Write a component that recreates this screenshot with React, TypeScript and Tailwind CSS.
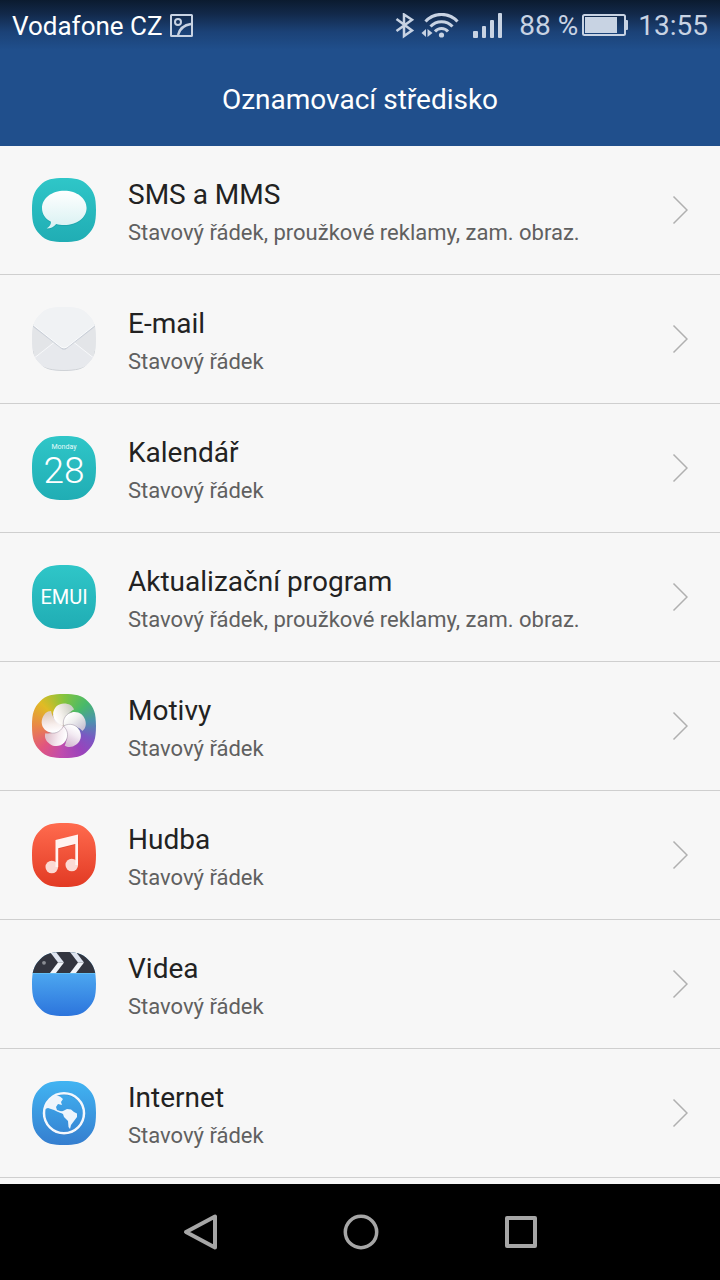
import type { ReactNode } from 'react';

const SHAPE = 'M32 0C43 0 50 1 56 7.500C62 13.500 64 19 64 32C64 45 62 50.500 56 56.500C50 63 43 64 32 64C21 64 14 63 8 56.500C2 50.500 0 45 0 32C0 19 2 13.500 8 7.500C14 1 21 0 32 0Z';

function AppIcon({ id, from, to, children }: { id: string; from: string; to: string; children: ReactNode }) {
  return (
    <svg viewBox="0 0 64 64" className="h-16 w-16 shrink-0" aria-hidden="true">
      <defs>
        <linearGradient id={`${id}-bg`} x1="0" y1="0" x2="0" y2="1">
          <stop offset="0" stopColor={from} />
          <stop offset="1" stopColor={to} />
        </linearGradient>
        <linearGradient id={`${id}-fg`} x1="0" y1="0" x2="0" y2="1">
          <stop offset="0" stopColor="#ffffff" />
          <stop offset="1" stopColor="#d8f1f2" />
        </linearGradient>
        <clipPath id={`${id}-clip`}>
          <path d={SHAPE} />
        </clipPath>
      </defs>
      <g clipPath={`url(#${id}-clip)`}>
        <rect width="64" height="64" fill={`url(#${id}-bg)`} />
        {children}
      </g>
    </svg>
  );
}

function MessagesIcon() {
  const bubble = 'M32.300 12.700C44.800 12.700 54.600 20.200 54.600 30C54.600 39.800 44.800 47 32.300 47C29 47 26.600 46.700 24.200 46C21.600 49.200 18.600 50.600 14.700 50.600C17.600 48.800 19 46.600 19 43.800C13.200 40.800 10 36 10 30C10 20.200 19.800 12.700 32.300 12.700Z';
  return (
    <AppIcon id="sms" from="#2fc6c8" to="#20adb4">
      <path d={bubble} fill="#128f98" opacity="0.35" transform="translate(0 1)" />
      <path d={bubble} fill="url(#sms-fg)" />
    </AppIcon>
  );
}

function MailIcon() {
  return (
    <AppIcon id="mail" from="#f0f2f5" to="#e4e6ea">
      <path d="M0 17L24 38L0 58Z" fill="#e3e5e8" />
      <path d="M64 17L40 38L64 58Z" fill="#e3e5e8" />
      <path d="M0 53L22 36H42L64 53V64H0Z" fill="#e7e9ed" />
      <path d="M1 52L22 35.500M63 52L42 35.500" stroke="#f8f9fb" strokeWidth="1" fill="none" />
      <path d="M0 19L29 41.500Q32 44 35 41.500L64 19V17H0Z" fill="#c4cad3" opacity="0.8" />
      <path d="M0 0H64V17L35 40Q32 42 29 40L0 17Z" fill="#f0f2f4" />
      <path d="M0 17L29 40Q32 42 35 40L64 17" fill="none" stroke="#fbfcfd" strokeWidth="1" />
      <path d="M1 44C2 56 9 63.500 32 63.500C55 63.500 62 56 63 44" fill="none" stroke="#cfd2d6" strokeWidth="1" />
    </AppIcon>
  );
}

function CalendarIcon() {
  return (
    <AppIcon id="cal" from="#2fc6c8" to="#20adb4">
      <text x="32" y="13" textAnchor="middle" fill="#e6fafa" className="font-['Roboto',sans-serif] text-[7px]">Monday</text>
      <text x="32" y="47" textAnchor="middle" fill="#ffffff" className="font-['Roboto',sans-serif] text-[37px] font-light">28</text>
    </AppIcon>
  );
}

function EmuiIcon() {
  return (
    <AppIcon id="emui" from="#2fc6c8" to="#20adb4">
      <text x="32" y="39" textAnchor="middle" fill="#ffffff" className="font-['Roboto',sans-serif] text-[20px]">EMUI</text>
    </AppIcon>
  );
}

function ThemesIcon() {
  return (
    <svg viewBox="0 0 64 64" className="h-16 w-16 shrink-0" aria-hidden="true">
      <defs>
        <linearGradient id="themes-petal" x1="0.900" y1="0.300" x2="0.100" y2="0.700">
          <stop offset="0" stopColor="#e0d3dc" stopOpacity="0.850" />
          <stop offset="0.600" stopColor="#f8f3f5" stopOpacity="0.950" />
          <stop offset="1" stopColor="#ffffff" />
        </linearGradient>
        <clipPath id="themes-clip">
          <path d={SHAPE} />
        </clipPath>
      </defs>
      <foreignObject width="64" height="64" clipPath="url(#themes-clip)">
        <div className="h-16 w-16 bg-[conic-gradient(from_0deg,#83c43e,#47b96b_45deg,#4c92ae_80deg,#7b57c3_115deg,#9a43bb_145deg,#bf4bae_185deg,#e1557f_225deg,#e98748_270deg,#e0bb25_315deg,#83c43e)]" />
      </foreignObject>
      {[0, 72, 144, 216, 288].map((angle) => (
        <g key={angle} transform={`rotate(${angle} 31.500 32)`}>
          <path d="M31.500 32C24 31 20.300 25 21 19.500C22 13 26.500 9.500 32 9.500C37 9.500 40.500 11.500 42 15.500C37 18 32 24 31.500 32Z" fill="url(#themes-petal)" />
          <path d="M31.500 32C24 31 20.300 25 21 19.500" fill="none" stroke="#7d6f86" strokeWidth="0.900" opacity="0.400" />
        </g>
      ))}
    </svg>
  );
}

function MusicIcon() {
  return (
    <AppIcon id="music" from="#ff6b4e" to="#e23a24">
      <g fill="#b52a18" opacity="0.350" transform="translate(0.500 1)">
        <path d="M23.500 17L46 11.500V20L26 25Z" />
      </g>
      <circle cx="19.800" cy="44" r="6.300" fill="#fbd9d3" />
      <circle cx="39.800" cy="42" r="6.300" fill="#fbd9d3" />
      <path d="M23.500 17L46 11.500V42H43.300V21L26.200 25.300V44H23.500Z" fill="#fff3f0" />
    </AppIcon>
  );
}

function VideoIcon() {
  return (
    <AppIcon id="video" from="#5cc0fa" to="#2c74dc">
      <rect width="64" height="21" fill="#33353f" />
      <rect y="21" width="64" height="1" fill="#60bdf4" />
      <path d="M18 0H24L32 10.500H26Z" fill="#dfe5f0" />
      <path d="M26 10.500H32L24 21H18Z" fill="#f2f5fa" />
      <path d="M38 0H44L52 10.500H46Z" fill="#dfe5f0" />
      <path d="M46 10.500H52L44 21H38Z" fill="#f2f5fa" />
      <circle cx="12" cy="10.800" r="1.900" fill="#8b8d94" />
    </AppIcon>
  );
}

function BrowserIcon() {
  return (
    <AppIcon id="web" from="#41b4f2" to="#357ecf">
      <circle cx="32" cy="33" r="20" fill="none" stroke="#1d5aa5" strokeWidth="2" opacity="0.350" />
      <circle cx="32" cy="32.300" r="20" fill="none" stroke="#f4f8fd" strokeWidth="2.500" />
      <path d="M14 24L18 18L23 14L28 15.500L31 18L29 21L30 24L26 23L24 26L25 29L28 30L31 31L30 32L26 31L22 29L16 27L13 28Z" fill="#eef5fc" />
      <path d="M31 30L35 28L39 28.500L42 31L45 32.500L45 36L42 40L39 44L38 48L36.500 46L36 40L32 36L31 33L27 31Z" fill="#eef5fc" />
    </AppIcon>
  );
}

const FULL = 'Stavový řádek, proužkové reklamy, zam. obraz.';
const BAR = 'Stavový řádek';

const apps: { name: string; detail: string; icon: ReactNode }[] = [
  { name: 'SMS a MMS', detail: FULL, icon: <MessagesIcon /> },
  { name: 'E-mail', detail: BAR, icon: <MailIcon /> },
  { name: 'Kalendář', detail: BAR, icon: <CalendarIcon /> },
  { name: 'Aktualizační program', detail: FULL, icon: <EmuiIcon /> },
  { name: 'Motivy', detail: BAR, icon: <ThemesIcon /> },
  { name: 'Hudba', detail: BAR, icon: <MusicIcon /> },
  { name: 'Videa', detail: BAR, icon: <VideoIcon /> },
  { name: 'Internet', detail: BAR, icon: <BrowserIcon /> },
];

function StatusBar() {
  return (
    <div className="flex h-[52px] items-center justify-between px-3 text-[#c8d3e3]">
      <div className="flex items-center gap-[6px]">
        <span className="text-[26px] leading-8 text-white">Vodafone CZ</span>
        <svg viewBox="0 1 24 24" className="h-6 w-6" fill="none" stroke="currentColor" strokeWidth="2" aria-hidden="true">
          <rect x="2" y="2" width="21" height="21" rx="0.500" />
          <circle cx="9" cy="9" r="3" />
          <path d="M9 22C10.500 16 15 12 22 11" strokeWidth="2.400" />
        </svg>
      </div>
      <div className="flex items-center">
        <svg viewBox="0 1 20 26" className="h-[26px] w-5" fill="none" stroke="currentColor" strokeWidth="2.500" aria-hidden="true">
          <path d="M1.500 7L17 18.500L9 24V2.500L17 7.700L1.500 19" />
        </svg>
        <svg viewBox="0 1 40 26" className="ml-[6px] h-[26px] w-10" fill="none" stroke="currentColor" strokeWidth="3" aria-hidden="true">
          <path d="M4.500 9.500C13 0 28 0 36.500 9.500" />
          <path d="M9.500 14.500C15.500 8 25.500 8 31.500 14.500" />
          <path d="M14 19.500C17.500 15.500 23.500 15.500 27 19.500" />
          <circle cx="20.500" cy="23" r="2.600" fill="currentColor" stroke="none" />
          <path d="M0.500 21L5 17V25ZM6.500 17L11.500 21L6.500 25Z" fill="currentColor" stroke="none" />
        </svg>
        <svg viewBox="0 0 30 26" className="ml-3 h-[26px] w-[30px]" fill="currentColor" aria-hidden="true">
          <rect x="0" y="18" width="5" height="7" rx="1" />
          <rect x="9" y="13" width="4" height="12" rx="1" />
          <rect x="17" y="7" width="4" height="18" rx="1" />
          <rect x="25" y="0" width="4" height="25" rx="1" />
        </svg>
        <span className="ml-4 text-[28px] leading-[34px]">88 %</span>
        <svg viewBox="0 1 46 24" className="ml-1 h-6 w-[46px]" fill="currentColor" aria-hidden="true">
          <rect x="1" y="2" width="42" height="20" rx="1.500" fill="none" stroke="currentColor" strokeWidth="2" />
          <rect x="3" y="4" width="32" height="16" />
          <rect x="43" y="7" width="3" height="10" rx="1" />
        </svg>
        <time className="ml-[10px] text-[28px] leading-[34px]">13:55</time>
      </div>
    </div>
  );
}

export default function App() {
  return (
    <div className="flex min-h-screen flex-col bg-[#f7f7f7] font-['Roboto',sans-serif]">
      <header className="bg-[#204f8c] bg-[linear-gradient(to_bottom,#0b1b2f_0px,#12294a_14px,#1b4277_32px,#204f8c_50px)]">
        <StatusBar />
        <h1 className="pt-[30px] pb-7 text-center text-[28px] leading-9 font-normal text-white">Oznamovací středisko</h1>
      </header>
      <main className="flex-1">
        <ul>
          {apps.map((app) => (
            <li key={app.name} className="border-b border-[#cfcfcf]">
              <button type="button" className="flex h-32 w-full items-center px-8 text-left">
                {app.icon}
                <span className="ml-8 flex min-w-0 flex-1 flex-col pt-2">
                  <span className="text-[28px] leading-[38px] text-[#222222]">{app.name}</span>
                  <span className="text-[22px] leading-[38px] text-[#606060]">{app.detail}</span>
                </span>
                <svg viewBox="0 0 16 30" className="h-[30px] w-4 shrink-0" fill="none" stroke="#b0b0b0" strokeWidth="1.500" aria-hidden="true">
                  <path d="M1.500 1.500L15 15L1.500 28.500" />
                </svg>
              </button>
            </li>
          ))}
        </ul>
      </main>
      <nav aria-label="Navigace" className="flex h-24 items-center justify-center gap-[120px] bg-black text-[#a6a6a6]">
        <button type="button" aria-label="Zpět">
          <svg viewBox="0 0 40 40" className="h-10 w-10" fill="none" stroke="currentColor" strokeWidth="4" strokeLinejoin="round">
            <path d="M35 4.500V35.500L6 20Z" />
          </svg>
        </button>
        <button type="button" aria-label="Domů">
          <svg viewBox="0 0 40 40" className="h-10 w-10" fill="none" stroke="currentColor" strokeWidth="3.500">
            <circle cx="21" cy="20" r="15.700" />
          </svg>
        </button>
        <button type="button" aria-label="Poslední aplikace">
          <svg viewBox="0 0 40 40" className="h-10 w-10" fill="none" stroke="currentColor" strokeWidth="4" strokeLinejoin="round">
            <rect x="7" y="6" width="28" height="28" />
          </svg>
        </button>
      </nav>
    </div>
  );
}
